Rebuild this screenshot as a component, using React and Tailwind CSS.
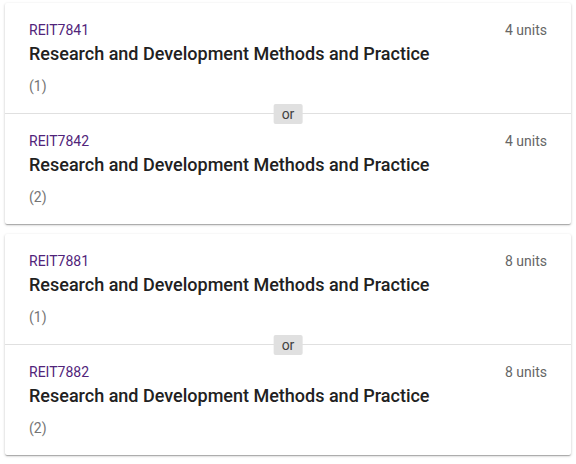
import React from "react";

const groups = [
  [
    { code: "REIT7841", units: "4 units", n: "(1)" },
    { code: "REIT7842", units: "4 units", n: "(2)" },
  ],
  [
    { code: "REIT7881", units: "8 units", n: "(1)" },
    { code: "REIT7882", units: "8 units", n: "(2)" },
  ],
];

function Item({ code, units, n }) {
  return (
    <div className="px-6 pt-[17px] pb-[17px]">
      <div className="flex justify-between text-sm leading-5">
        <span className="text-[#51247a]">{code}</span>
        <span className="text-[#666666]">{units}</span>
      </div>
      <div className="text-[18px] leading-7 text-[#212121] font-medium">
        Research and Development Methods and Practice
      </div>
      <div className="mt-2 text-sm leading-5 text-[#757575]">{n}</div>
    </div>
  );
}

export default function App() {
  return (
    <div
      className="bg-white w-[576px] h-[464px] pt-[3px] pl-[5px] pr-[5px] flex flex-col gap-[10px]"
      style={{ fontFamily: "Roboto, 'Liberation Sans', sans-serif" }}
    >
      {groups.map((g, gi) => (
        <div
          key={gi}
          className="bg-white rounded-[2px] shadow-[0_1px_3px_rgba(0,0,0,0.2),0_1px_1px_rgba(0,0,0,0.14),0_2px_1px_-1px_rgba(0,0,0,0.12)]"
        >
          <Item {...g[0]} />
          <div className="relative border-t border-[#e0e0e0]">
            <span className="absolute left-1/2 -translate-x-1/2 -translate-y-1/2 top-0 bg-[#e0e0e0] text-[#424242] text-sm leading-5 px-2 rounded-[2px]">
              or
            </span>
          </div>
          <Item {...g[1]} />
        </div>
      ))}
    </div>
  );
}
